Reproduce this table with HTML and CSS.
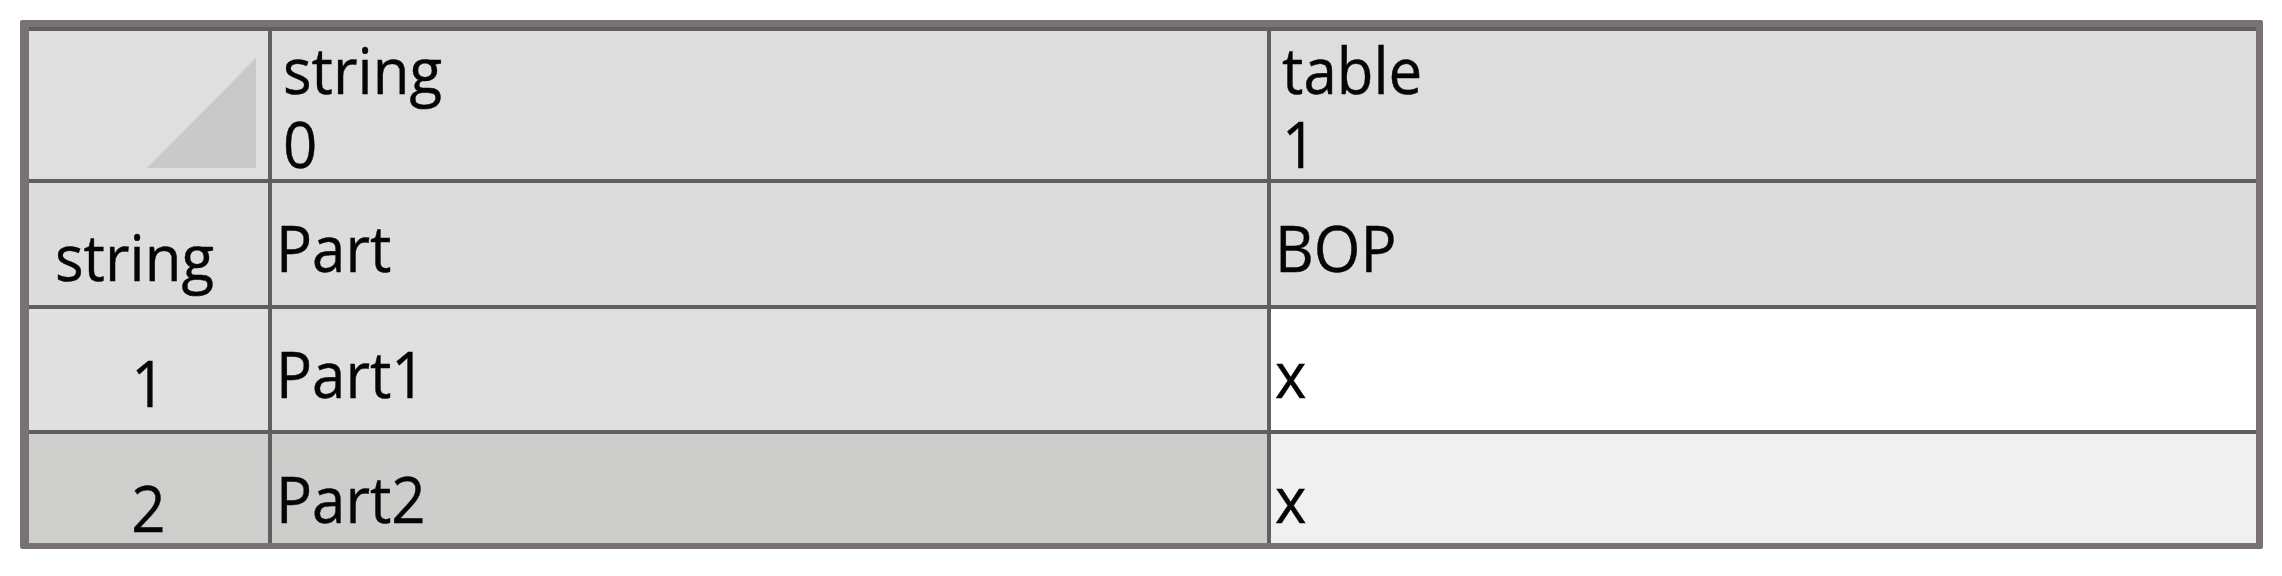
FILE: index.html
```html
<!DOCTYPE html>
<html>
<head>
<meta charset="utf-8">
<link rel="stylesheet" href="styles.css">
</head>
<body>
<div class="frame">
  <div class="grid">
    <div class="cell corner">
      <svg class="tri" width="109" height="110" viewBox="0 0 109 110"><polygon points="0,110 109,110 109,0" fill="#c9c9c9"/></svg>
    </div>
    <div class="cell colhead"><div><span class="t">string</span></div><div><span class="t">0</span></div></div>
    <div class="cell colhead"><div><span class="t">table</span></div><div><span class="t">1</span></div></div>

    <div class="cell rowhead wide"><span class="t">string</span></div>
    <div class="cell data gray"><span class="t">Part</span></div>
    <div class="cell data gray"><span class="t">BOP</span></div>

    <div class="cell rowhead r1"><span class="t">1</span></div>
    <div class="cell data sel1"><span class="t">Part1</span></div>
    <div class="cell data white"><span class="t">x</span></div>

    <div class="cell rowhead r2"><span class="t">2</span></div>
    <div class="cell data sel2"><span class="t">Part2</span></div>
    <div class="cell data alt"><span class="t">x</span></div>
  </div>
</div>
</body>
</html>
```

FILE: styles.css
```css
html, body {
  margin: 0;
  padding: 0;
  background: #ffffff;
}

body {
  padding: 20px 0 0 20px;
  font-family: "Open Sans", "Noto Sans", sans-serif;
  font-size: 60px;
  line-height: 60px;
  color: #050505;
}

.frame {
  width: 2227px;
  height: 516px;
  border-style: solid;
  border-color: #787272;
  border-width: 7px 7px 6px 9px;
  border-radius: 2px;
  overflow: hidden;
}

.grid {
  display: grid;
  grid-template-columns: 239px 995px 985px;
  grid-template-rows: 148px 122px 121px 109px;
  gap: 4px;
  padding-top: 4px;
  background: #5f5f5f;
  height: 512px;
}

.cell {
  background: #dcdcdc;
  box-sizing: border-box;
  white-space: nowrap;
}

.t {
  display: inline-block;
  line-height: 60px;
  transform: scaleY(1.08);
  transform-origin: 0 89%;
  -webkit-text-stroke: 0.4px #050505;
}

.corner {
  background: #dfdfdf;
  display: flex;
  justify-content: flex-end;
  align-items: flex-end;
  padding: 0 12px 11px 0;
}

.tri {
  display: block;
}

.colhead {
  padding: 3px 0 0 11px;
  line-height: 74px;
  background: #dddddd;
}

.rowhead {
  text-align: center;
  padding-top: 45px;
  background: #dcdcdc;
}

.rowhead.wide {
  padding-right: 28px;
}

.rowhead.r1 {
  background: #e0e0e0;
}

.rowhead.r2 {
  background: #cececc;
}

.data {
  padding: 36px 0 0 4px;
}

.gray {
  background: #dcdcdc;
}

.sel1 {
  background: #dfdfdf;
}

.sel2 {
  background: #cdcdcb;
}

.white {
  background: #ffffff;
}

.alt {
  background: #f0f0f0;
}
```
